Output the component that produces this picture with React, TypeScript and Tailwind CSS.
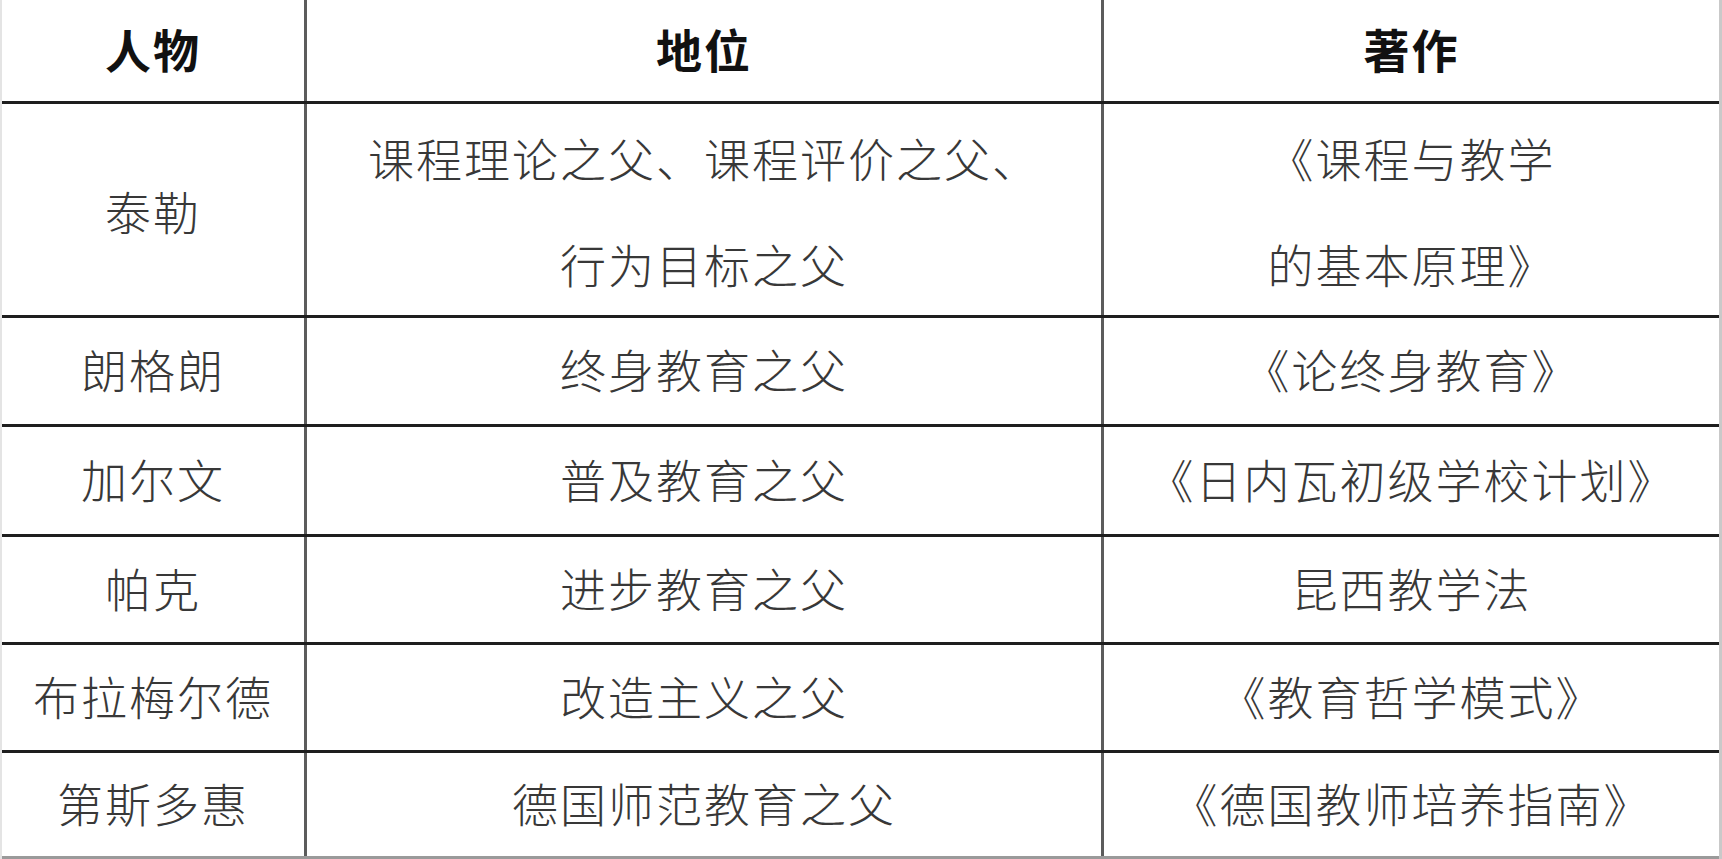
import React from "react";

type Row = { h: string; name: string; role: string[]; work: string[] };

const rows: Row[] = [
  { h: "h-[211px]", name: "泰勒", role: ["课程理论之父、课程评价之父、", "行为目标之父"], work: ["《课程与教学", "的基本原理》"] },
  { h: "h-[106px]", name: "朗格朗", role: ["终身教育之父"], work: ["《论终身教育》"] },
  { h: "h-[107px]", name: "加尔文", role: ["普及教育之父"], work: ["《日内瓦初级学校计划》"] },
  { h: "h-[105px]", name: "帕克", role: ["进步教育之父"], work: ["昆西教学法"] },
  { h: "h-[105px]", name: "布拉梅尔德", role: ["改造主义之父"], work: ["《教育哲学模式》"] },
  { h: "h-[103px]", name: "第斯多惠", role: ["德国师范教育之父"], work: ["《德国教师培养指南》"] },
];

const font = "[font-family:'Noto_Sans_CJK_SC','Noto_Sans',sans-serif]";

function Cell({ lines, border, header }: { lines: string[]; border: boolean; header?: boolean }) {
  return (
    <div
      className={`flex flex-col items-center justify-center text-center pb-[6px] ${border ? "border-r-[3px] border-r-[#5c5c5c]" : ""}`}
    >
      {lines.map((l, i) => (
        <div
          key={i}
          className={
            header
              ? "text-[46px] leading-[56px] font-bold text-[#111] tracking-[2px] whitespace-nowrap"
              : `text-[46px] ${lines.length > 1 ? "leading-[106px]" : "leading-[56px]"} font-light text-[#383838] tracking-[2px] whitespace-nowrap`
          }
        >
          {l}
        </div>
      ))}
    </div>
  );
}

function HLine({ light }: { light?: boolean }) {
  return <div className={light ? "h-[3px] bg-[#9a9a9a]" : "h-[3px] bg-[#1e1e1e]"} />;
}

export default function App() {
  return (
    <div className={`w-[1722px] h-[859px] bg-white flex flex-col border-l-2 border-l-[#e4e4e4] border-r-[3px] border-r-[#c9c9c9] ${font}`}>
      <div className="grid grid-cols-[305px_797px_1fr] h-[101px]">
        <Cell lines={["人物"]} border header />
        <Cell lines={["地位"]} border header />
        <Cell lines={["著作"]} border={false} header />
      </div>
      <HLine />
      {rows.map((r, i) => (
        <React.Fragment key={i}>
          <div className={`grid grid-cols-[305px_797px_1fr] ${r.h}`}>
            <Cell lines={[r.name]} border />
            <Cell lines={r.role} border />
            <Cell lines={r.work} border={false} />
          </div>
          <HLine light={i === rows.length - 1} />
        </React.Fragment>
      ))}
    </div>
  );
}
